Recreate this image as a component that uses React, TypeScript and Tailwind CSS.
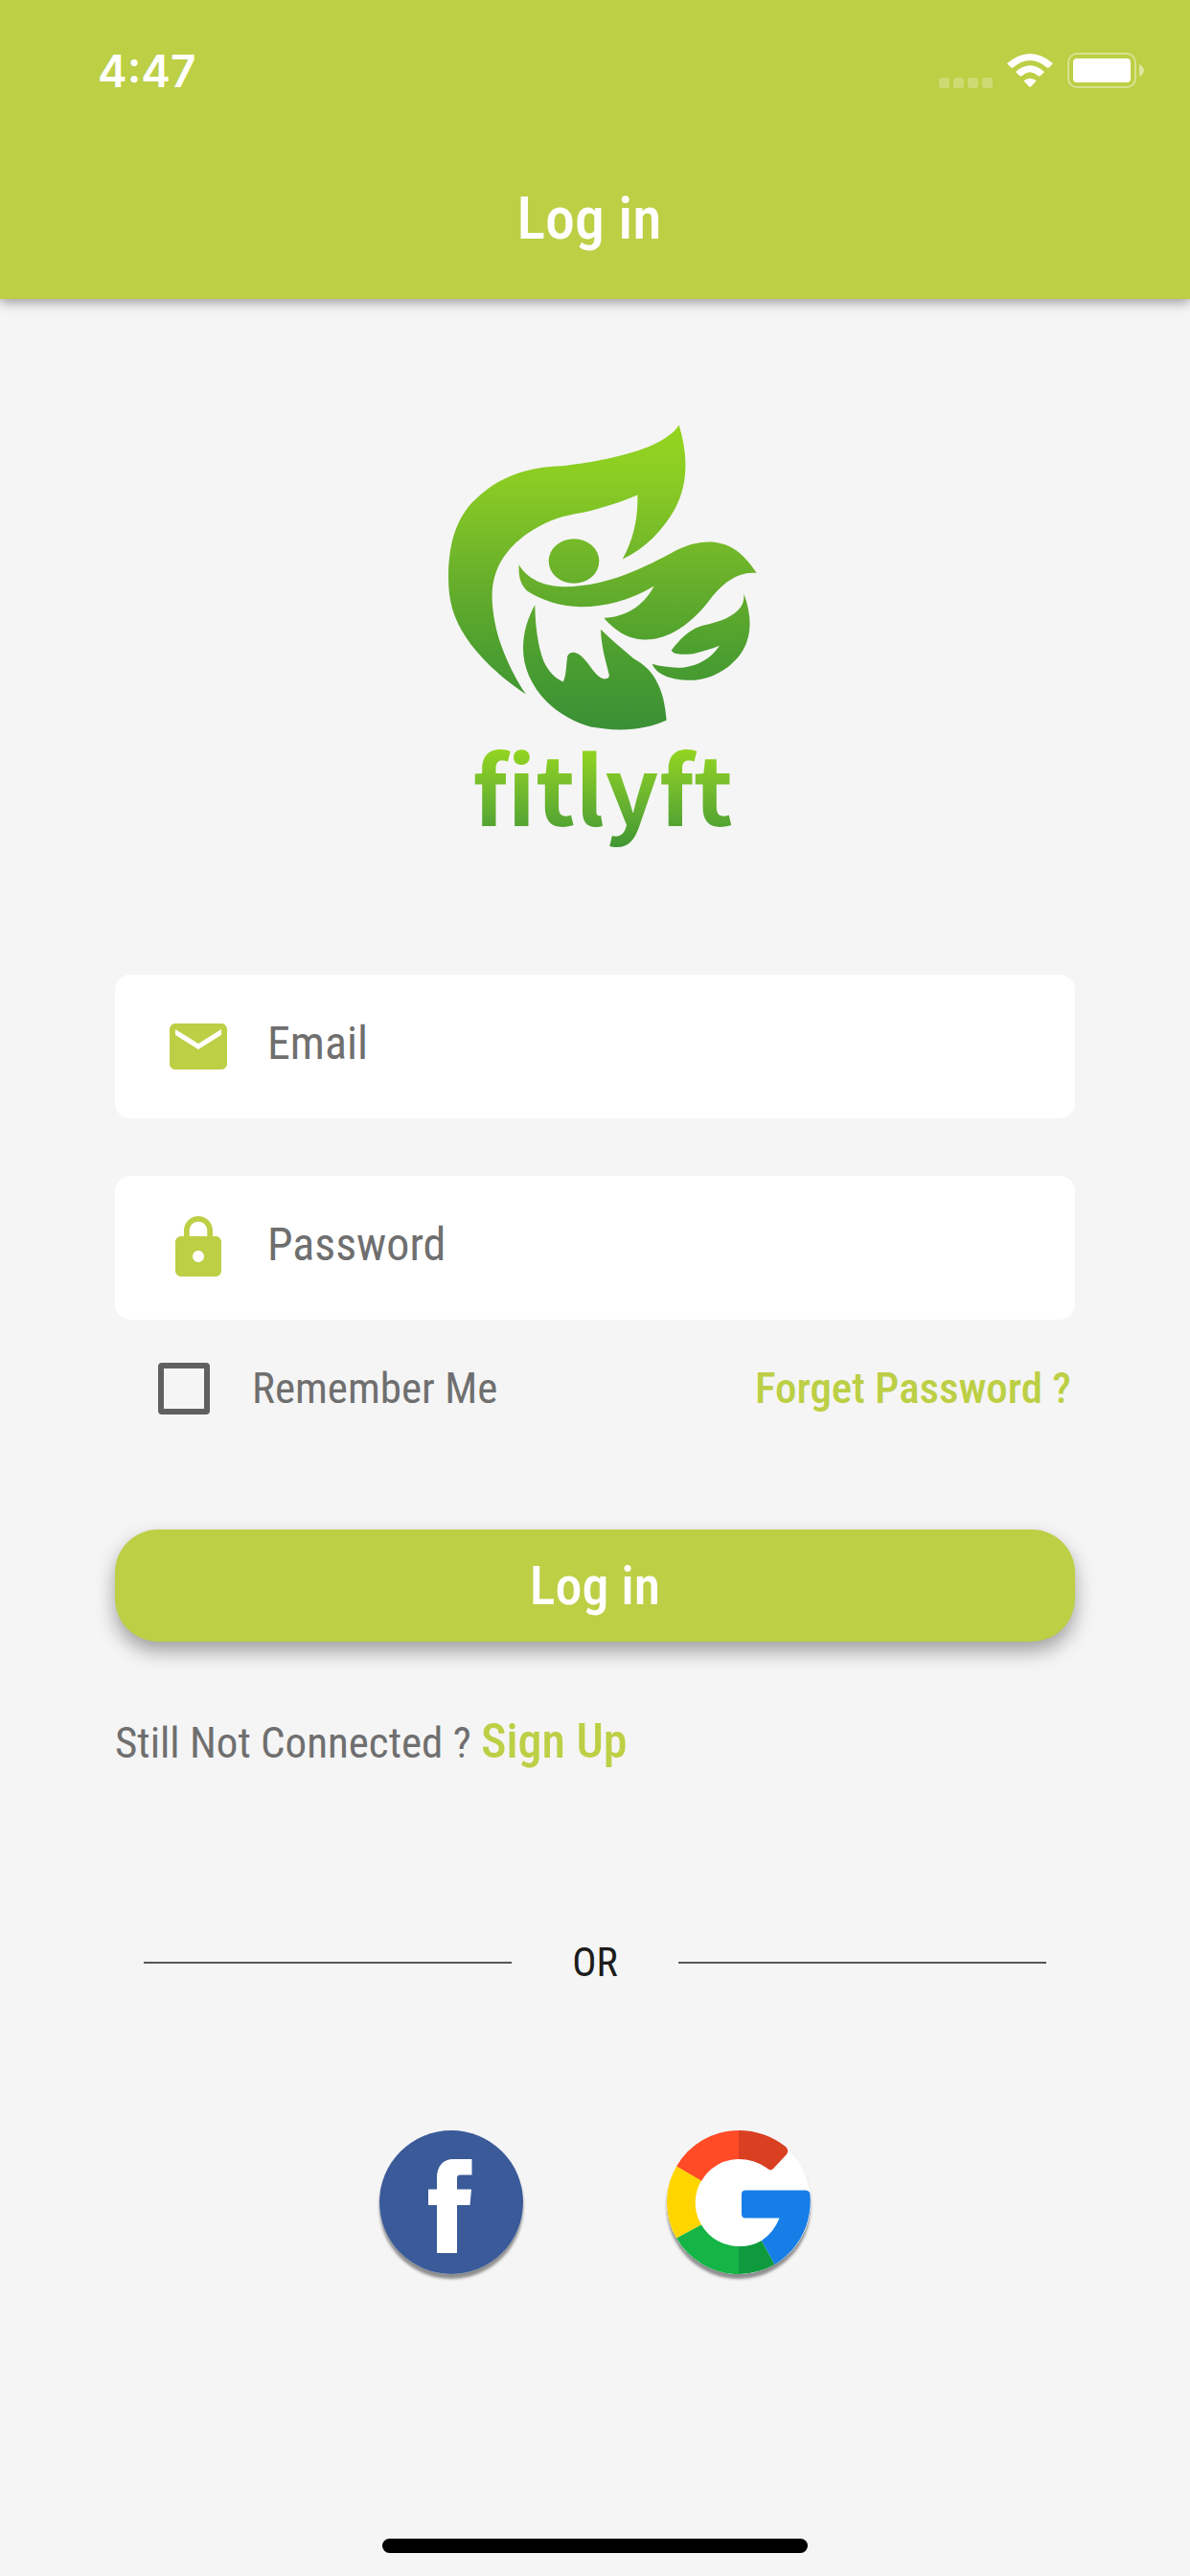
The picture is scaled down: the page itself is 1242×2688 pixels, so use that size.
import type { ReactNode } from "react";
import { MdEmail, MdLock } from "react-icons/md";

function StatusBar() {
  return (
    <div className="flex h-[148px] items-center justify-between pr-12 pl-[102px]">
      <span className="font-['Inter',sans-serif] text-[46px] leading-none font-semibold">4:47</span>
      <div className="flex items-center gap-[15px]">
        <svg width="56" height="38" viewBox="0 0 56 38" fill="#fff" fillOpacity="0.25" aria-hidden="true">
          <rect x="0" y="26" width="11" height="11" rx="3" />
          <rect x="15" y="26" width="11" height="11" rx="3" />
          <rect x="30" y="26" width="11" height="11" rx="3" />
          <rect x="45" y="26" width="11" height="11" rx="3" />
        </svg>
        <svg width="48" height="38" viewBox="0 0 144 114" fill="#fff" aria-hidden="true">
          <path d="M0 34Q72 -28 144 34L132 46Q128 49 124 46Q72 2 20 46Q16 49 12 46Z" />
          <path d="M27 60Q72 20 117 60L105 72Q101 75 97 72Q72 50 47 72Q43 75 39 72Z" />
          <path d="M52 88Q72 72 92 88L75 106Q72 109 69 106Z" />
        </svg>
        <svg width="80" height="38" viewBox="0 0 80 38" aria-hidden="true">
          <rect x="1" y="1" width="70" height="35" rx="9" fill="none" stroke="#fff" strokeOpacity="0.4" strokeWidth="2" />
          <rect x="6" y="6" width="60" height="25" rx="4" fill="#fff" />
          <path d="M75 12Q80 15 80 18.500Q80 22 75 25Z" fill="#fff" fillOpacity="0.5" />
        </svg>
      </div>
    </div>
  );
}

function Logo() {
  return (
    <div className="flex flex-col items-center pl-4">
      <svg viewBox="84 68 966 956" className="h-[319px] w-[322px]" aria-hidden="true">
        <defs>
          <linearGradient id="leaf" gradientUnits="userSpaceOnUse" x1="0" y1="68" x2="0" y2="1024">
            <stop offset="0" stopColor="#94d51f" />
            <stop offset="0.18" stopColor="#8bcc24" />
            <stop offset="0.5" stopColor="#69b02b" />
            <stop offset="0.75" stopColor="#4c9f2f" />
            <stop offset="1" stopColor="#3a9036" />
          </linearGradient>
        </defs>
        <g fill="url(#leaf)">
          <path d="M806 69C792 92 762 114 722 132C650 164 540 186 440 197C300 200 216 252 160 310C104 370 84 450 84 550C85 620 98 672 140 735C180 796 250 862 327 912C296 868 262 800 243 740C222 672 215 598 226 556C240 490 286 436 350 397C400 366 446 352 506 343C570 328 630 308 676 288C678 360 664 426 629 489C700 456 758 396 794 330C836 250 834 160 806 69Z" />
          <ellipse cx="477" cy="495" rx="79" ry="70" />
          <path d="M305 506C330 550 382 574 446 575C520 575 596 556 670 524C722 502 760 482 796 462C880 420 946 432 986 462C1012 482 1034 508 1049 533C1000 526 950 556 910 606C876 654 836 692 790 717C740 744 690 746 652 733C618 720 590 696 571 673C640 670 696 634 728 573C650 620 570 638 500 638C430 638 374 616 330 588C308 566 303 540 305 506Z" />
          <path d="M355 632C356 700 364 758 382 808C396 840 418 862 443 873C454 852 452 820 457 792C466 774 486 780 502 794C528 818 546 860 572 864C584 864 589 858 587 850C574 800 562 756 561 709C592 740 630 772 664 800C696 818 716 836 732 864C756 906 762 944 767 993C726 1012 676 1023 620 1023C592 1023 560 1018 530 1014C480 1000 430 972 392 935C344 886 318 826 318 770C318 714 334 670 355 632Z" />
          <path d="M1009 596C1012 628 998 648 968 666C930 690 890 690 856 706C822 724 800 752 782 775C792 790 820 788 850 785C882 778 906 770 933 760C910 796 870 822 822 828C786 830 752 826 722 817C734 848 776 866 830 868C900 870 960 836 996 790C1038 732 1034 666 1009 596Z" />
        </g>
      </svg>
      <span className="bg-linear-to-b from-[#94d51f] from-15% to-[#3f9634] to-95% bg-clip-text px-2 pb-4 font-['Noto_Sans_CJK_SC',sans-serif] text-[98px] leading-[114px] font-bold text-transparent">
        fitlyft
      </span>
    </div>
  );
}

function Field({ id, type, label, icon }: { id: string; type: string; label: string; icon: ReactNode }) {
  return (
    <div className="flex h-[150px] items-center rounded-2xl bg-white pl-[51px] text-[#bccf45]">
      <label htmlFor={id} aria-label={label}>
        {icon}
      </label>
      <input
        id={id}
        type={type}
        placeholder={label}
        className="ml-9 h-full min-w-0 flex-1 pb-2 text-5xl text-[#6f6f6f] outline-none placeholder:text-[#6f6f6f]"
      />
    </div>
  );
}

function GoogleMark() {
  return (
    <svg viewBox="0 0 150 150" className="size-full" aria-hidden="true">
      <circle cx="75" cy="75" r="75" fill="#fff" />
      <path d="M75 0A75 75 0 0 0 10.050 37.500L36 53A45 45 0 0 1 75 30Z" fill="#ff4b26" />
      <path d="M75 0Q102 0 124 17Q128 21 125 25L111 40Q108 43 104 39Q91 30 75 30Z" fill="#d93f21" />
      <path d="M10.050 37.500A75 75 0 0 0 10.050 112.500L36 98.500A45 45 0 0 1 36 52.500Z" fill="#ffd500" />
      <path d="M10.050 112.500A75 75 0 0 0 75 150V121A45 45 0 0 1 36 98.500Z" fill="#14b446" />
      <path d="M75 150A75 75 0 0 0 112.500 140L99 115A45 45 0 0 1 75 121Z" fill="#0f9a3e" />
      <path d="M82 62.500H145Q149 62.500 149.500 67C152 97 138 125 112.500 140L99 115Q112 106 117.500 91.500H82Q78 91.500 78 87.500V66.500Q78 62.500 82 62.500Z" fill="#167ee6" />
    </svg>
  );
}

function FacebookMark() {
  return (
    <svg viewBox="0 0 150 150" className="size-full" aria-hidden="true">
      <circle cx="75" cy="75" r="75" fill="#3a5a99" />
      <path d="M60 128V78H51V61.500H60V49C60 38 66 30 77 30H96.500V46.500H84Q81 46.500 81 50V61.500H96L94.500 78H81V128Z" fill="#fff" />
    </svg>
  );
}

function SocialButton({ label, children }: { label: string; children: ReactNode }) {
  return (
    <button type="button" aria-label={label} className="size-[150px] rounded-full shadow-[0_5px_3px_#8e8e8e]">
      {children}
    </button>
  );
}

export default function App() {
  return (
    <div className="flex min-h-screen flex-col bg-[#f5f5f5] font-['Roboto_Condensed','Roboto',sans-serif] text-[#6f6f6f]">
      <header className="h-[312px] bg-[#bccf45] text-white shadow-[0_3px_12px_rgba(0,0,0,0.4)]">
        <StatusBar />
        <h1 className="pt-10 pr-3 text-center text-[62px] leading-[80px] font-medium">Log in</h1>
      </header>

      <main className="flex flex-col px-[120px] pt-[131px]">
        <Logo />

        <form className="mt-[125px] flex flex-col" onSubmit={(e) => e.preventDefault()}>
          <div className="flex flex-col gap-[60px]">
            <Field id="email" type="email" label="Email" icon={<MdEmail className="size-[72px]" />} />
            <Field id="password" type="password" label="Password" icon={<MdLock className="size-[72px]" />} />
          </div>

          <div className="mt-9 flex h-[72px] items-center justify-between text-[45px]">
            <label className="flex items-center gap-11 pl-[45px]">
              <input
                type="checkbox"
                className="size-[54px] appearance-none rounded-[4px] border-6 border-[#606060] checked:bg-[#bccf45]"
              />
              Remember Me
            </label>
            <a href="#forgot" className="pr-1 font-medium text-[#bccf45]">
              Forget Password ?
            </a>
          </div>

          <button
            type="submit"
            className="mt-[111px] h-[117px] rounded-[45px] bg-[#bccf45] text-[56px] font-medium text-white shadow-[0_10px_20px_rgba(0,0,0,0.35)]"
          >
            Log in
          </button>
        </form>

        <p className="mt-[68px] text-[45px] leading-[72px]">
          Still Not Connected ?{" "}
          <a href="#signup" className="text-[50px] font-medium text-[#bccf45]">
            Sign Up
          </a>
        </p>

        <div className="mt-[163px] flex items-center px-[30px] text-[42px] leading-[60px] text-[#1c1c1c]">
          <span className="h-0.5 flex-1 bg-[#565656]" />
          <span className="w-[174px] text-center">OR</span>
          <span className="h-0.5 flex-1 bg-[#565656]" />
        </div>

        <div className="mt-[145px] flex justify-center gap-[150px]">
          <SocialButton label="Facebook">
            <FacebookMark />
          </SocialButton>
          <SocialButton label="Google">
            <GoogleMark />
          </SocialButton>
        </div>
      </main>

      <div className="mx-auto mt-auto mb-6 h-[15px] w-[444px] rounded-full bg-black" />
    </div>
  );
}
